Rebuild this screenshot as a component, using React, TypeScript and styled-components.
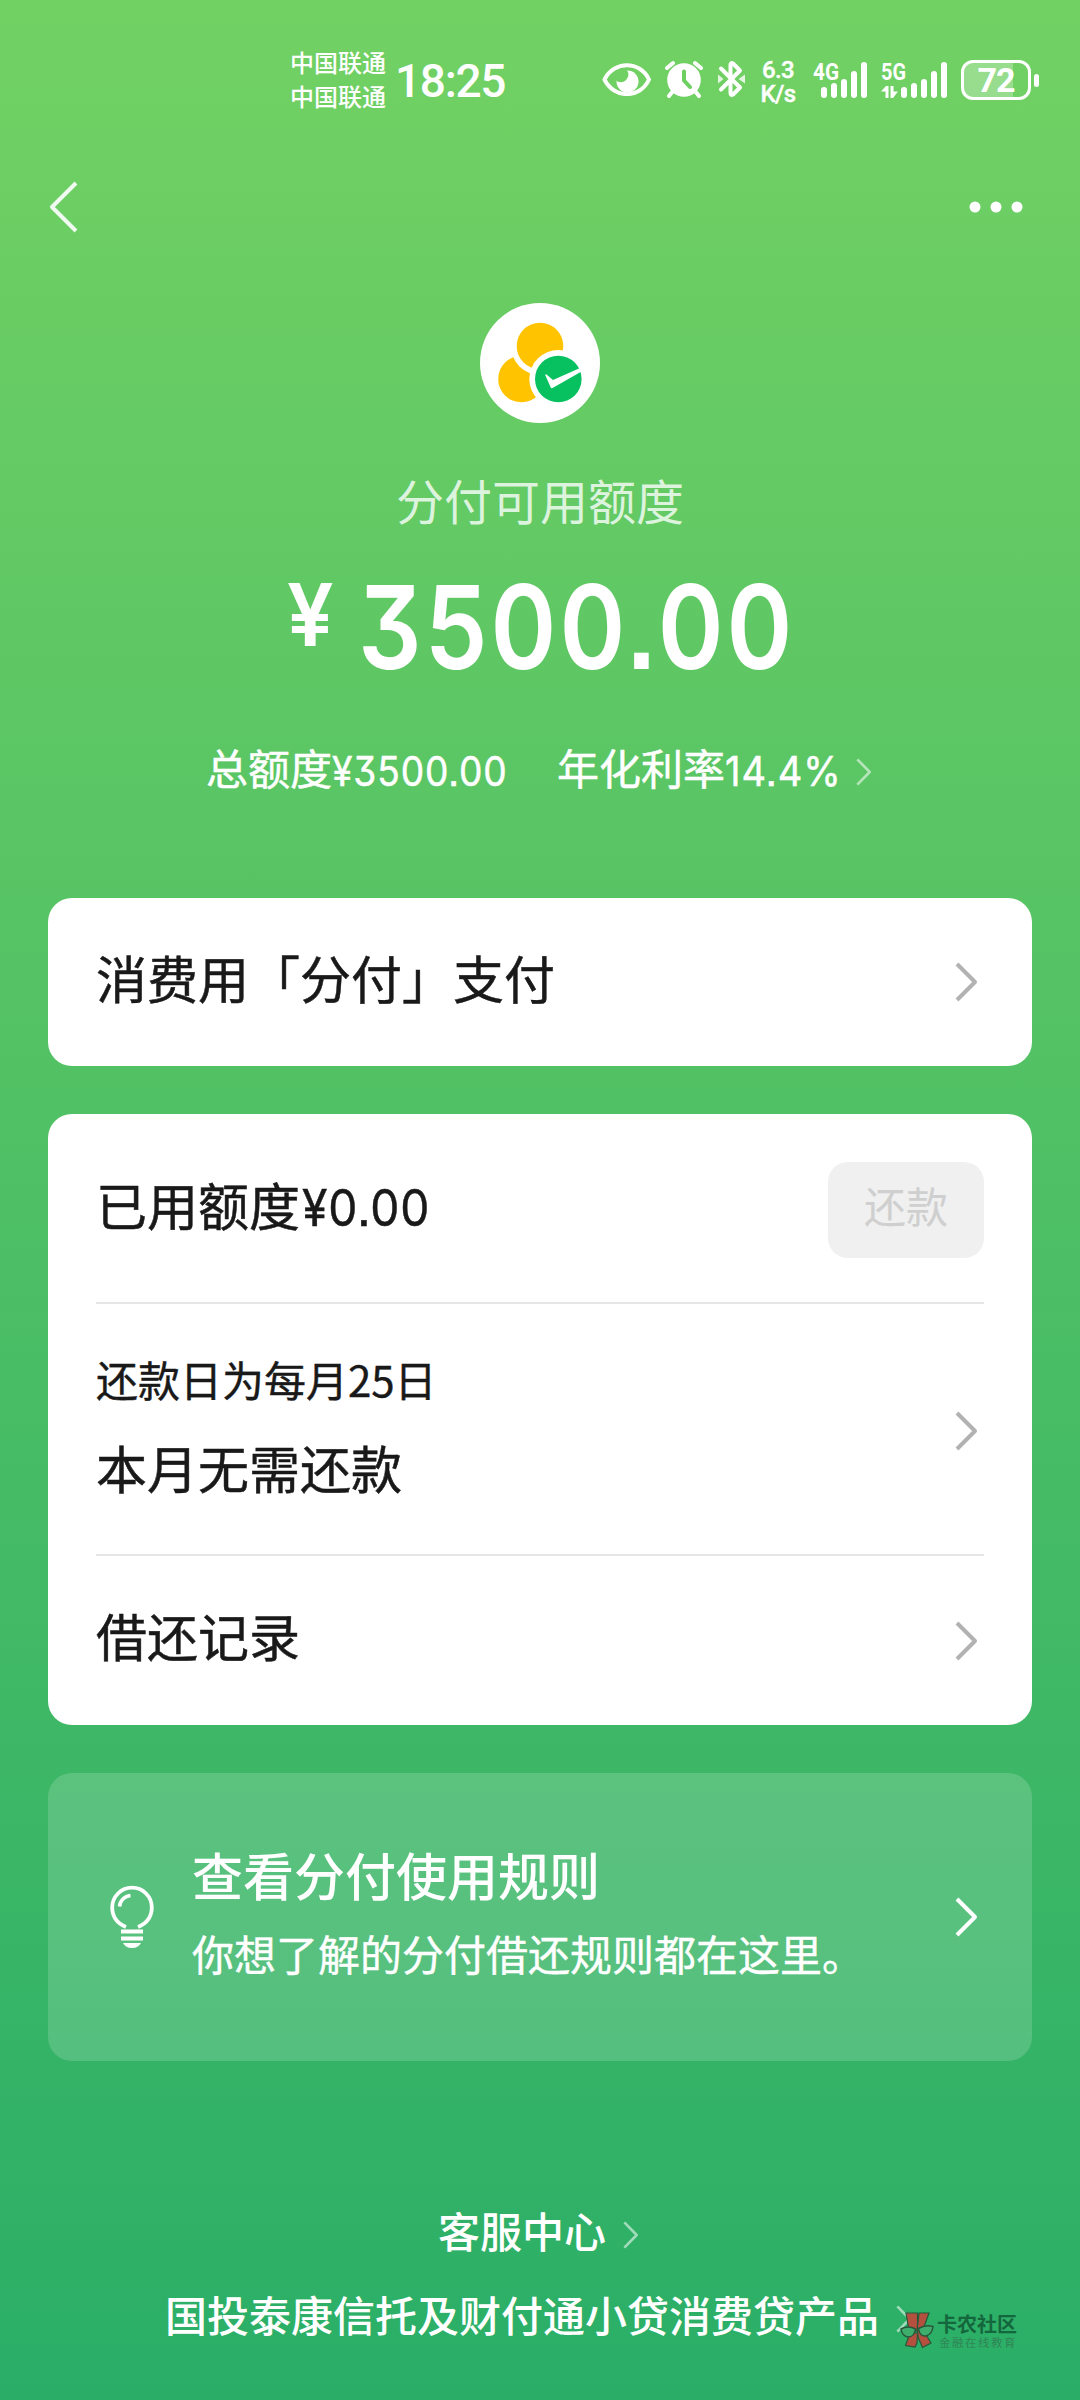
import React from "react";
import styled, { createGlobalStyle } from "styled-components";

const GlobalStyle = createGlobalStyle`
  * { box-sizing: border-box; }
  html, body { margin: 0; padding: 0; }
  body {
    width: 1080px;
    font-family: "Noto Sans CJK SC", "Noto Sans", sans-serif;
  }
  svg { display: block; flex: none; }
`;

const Screen = styled.main`
  position: relative;
  display: flex;
  flex-direction: column;
  width: 1080px;
  height: 2400px;
  overflow: hidden;
  color: #fff;
  background: linear-gradient(180deg, #72d163 0%, #2aae67 100%);
`;

/* ---------- status bar ---------- */

const StatusBar = styled.header`
  display: flex;
  height: 150px;
  padding: 45px 40px 0 290px;
`;

const Carriers = styled.div`
  display: flex;
  flex-direction: column;
  width: 105px;
  font-size: 24px;
  font-weight: 500;
  line-height: 34px;
`;

const Clock = styled.time`
  width: 207px;
  padding-top: 1px;
  font-family: Roboto, sans-serif;
  font-size: 46px;
  font-weight: 500;
  line-height: 70px;
  letter-spacing: -1.3px;
`;

const StatusIcons = styled.div`
  display: flex;
  align-items: flex-start;
  padding-top: 15px;
`;

const StatusSlot = styled.div<{ $w: number }>`
  width: ${(p) => p.$w}px;
`;

const NetSpeed = styled.div`
  display: flex;
  flex-direction: column;
  width: 54px;
  margin: -2px 0 0 -1px;
  font-family: Roboto, sans-serif;
  font-size: 24px;
  font-weight: 500;
  line-height: 24px;
  -webkit-text-stroke: 0.4px currentColor;
`;

const SpeedLine = styled.span`
  width: 38px;
  text-align: center;
  letter-spacing: -0.6px;
`;

const Battery = styled.div`
  display: flex;
  align-items: center;
  gap: 3px;
`;

const BatteryBody = styled.div`
  display: flex;
  align-items: center;
  justify-content: center;
  width: 70px;
  height: 40px;
  border: 3px solid #fff;
  border-radius: 12px;
  background: linear-gradient(90deg, rgba(255, 255, 255, 0.28) 76%, transparent 76%);
  font-family: Roboto, sans-serif;
  font-size: 34px;
  font-weight: 700;
  line-height: 34px;
  letter-spacing: -1px;
`;

const BatteryNub = styled.div`
  width: 5px;
  height: 13px;
  border-radius: 3px;
  background: #fff;
`;

/* ---------- navigation ---------- */

const NavBar = styled.nav`
  display: flex;
  align-items: center;
  justify-content: space-between;
  height: 114px;
  padding: 0 57px 0 49px;
`;

/* ---------- summary ---------- */

const Summary = styled.section`
  display: flex;
  flex-direction: column;
  align-items: center;
  height: 634px;
  padding-top: 39px;
`;

const SummaryLabel = styled.h1`
  margin: 40px 0 0;
  font-size: 48px;
  font-weight: 400;
  line-height: 72px;
  color: rgba(255, 255, 255, 0.78);
`;

const Amount = styled.div`
  display: flex;
  align-items: flex-start;
  width: 506px;
  height: 140px;
  margin-top: 23px;
`;

const Yen = styled.span`
  width: 71px;
  padding-top: 5px;
  font-family: Inter, Roboto, sans-serif;
  font-size: 87px;
  font-weight: 600;
  line-height: 1.2;
  transform: scaleX(0.95);
  transform-origin: 0 50%;
`;

const Figures = styled.span<{ $size: number; $w: number; $scale?: number; $weight?: number; $gap?: number }>`
  display: inline-block;
  width: ${(p) => p.$w}px;
  font-family: Inter, Roboto, sans-serif;
  font-feature-settings: "cv09" 1, "ss07" 1;
  font-size: ${(p) => p.$size}px;
  font-weight: ${(p) => p.$weight ?? 400};
  letter-spacing: ${(p) => p.$gap ?? 0}px;
  line-height: 1.2;
  white-space: nowrap;
  transform: scaleX(${(p) => p.$scale ?? 0.86});
  transform-origin: 0 50%;
`;

const RateRow = styled.div`
  display: flex;
  align-items: center;
  width: 668px;
  height: 64px;
  margin-top: 42px;
  font-size: 42px;
  line-height: 64px;
  -webkit-text-stroke: 0.5px currentColor;
`;

const RateItem = styled.span<{ $w: number }>`
  display: flex;
  align-items: center;
  width: ${(p) => p.$w}px;
`;

const RateName = styled.span`
  margin-top: -10px;
`;

/* ---------- cards ---------- */

const Cards = styled.section`
  display: flex;
  flex-direction: column;
  gap: 48px;
  padding: 0 48px;
`;

const Card = styled.div<{ $tint?: boolean; $h: number }>`
  display: flex;
  flex-direction: column;
  height: ${(p) => p.$h}px;
  padding: 0 48px;
  border-radius: 24px;
  background: ${(p) => (p.$tint ? "rgba(255, 255, 255, 0.16)" : "#fff")};
  color: ${(p) => (p.$tint ? "#fff" : "#191919")};
`;

const Row = styled.div<{ $h: number; $line?: boolean }>`
  display: flex;
  align-items: center;
  justify-content: space-between;
  height: ${(p) => p.$h}px;
  padding-top: ${(p) => (p.$line ? 3 : 0)}px;
  border-bottom: ${(p) => (p.$line ? "2px solid #e6e6e6" : "0")};
`;

const RowText = styled.div<{ $lift?: number }>`
  display: flex;
  flex-direction: column;
  flex: 1;
  margin-top: -${(p) => p.$lift ?? 0}px;
`;

const Title = styled.div<{ $weight?: number }>`
  display: flex;
  align-items: center;
  height: 76px;
  margin-top: -11px;
  font-size: 51px;
  font-weight: ${(p) => p.$weight ?? 400};
  line-height: 76px;
  white-space: nowrap;
  -webkit-text-stroke: ${(p) => (p.$weight ? 0 : 0.5)}px currentColor;
`;

const UsedAmount = styled.span`
  display: flex;
  padding: 7px 0 0 2px;
`;

const Caption = styled.div<{ $before?: number; $after?: number }>`
  height: 60px;
  margin-top: ${(p) => p.$before ?? 0}px;
  margin-bottom: ${(p) => p.$after ?? 0}px;
  font-size: 42px;
  line-height: 60px;
  white-space: nowrap;
  -webkit-text-stroke: 0.4px currentColor;
`;

const ChevronBox = styled.span`
  display: flex;
  margin-right: 6px;
`;

const RepayButton = styled.button`
  width: 156px;
  height: 96px;
  padding: 0 0 9px;
  border: 0;
  border-radius: 20px;
  background: #f0f0f0;
  color: #cfcfcf;
  font: 400 42px/1.4 "Noto Sans CJK SC", sans-serif;
`;

const BulbBox = styled.span`
  display: flex;
  width: 96px;
  padding-left: 13px;
`;

/* ---------- footer ---------- */

const Footer = styled.footer`
  display: flex;
  flex-direction: column;
  align-items: flex-start;
  padding-top: 132px;
`;

const FooterLink = styled.a<{ $x: number }>`
  display: flex;
  align-items: center;
  gap: 17px;
  height: 84px;
  padding-left: ${(p) => p.$x}px;
  font-size: 42px;
  font-weight: 500;
  line-height: 64px;
  white-space: nowrap;
`;

const FooterText = styled.span`
  margin-top: -10px;
`;

const Watermark = styled.div`
  position: absolute;
  left: 900px;
  top: 2311px;
  display: flex;
  gap: 3px;
`;

const WatermarkText = styled.div`
  display: flex;
  flex-direction: column;
  padding-top: 2px;
`;

const WatermarkName = styled.span`
  font-size: 20px;
  font-weight: 700;
  line-height: 22px;
  color: #14663c;
`;

const WatermarkSub = styled.span`
  padding-left: 2px;
  font-size: 11.5px;
  line-height: 15px;
  letter-spacing: 1.5px;
  color: rgba(50, 110, 75, 0.65);
`;

/* ---------- icons ---------- */

const Chevron = ({ w = 23, h = 40, stroke = 4, color = "#b2b2b2" }) => (
  <svg width={w} height={h} viewBox={`0 0 ${w} ${h}`} fill="none">
    <path
      d={`M${stroke / 2} ${stroke / 2} L${w - stroke / 2 - 1} ${h / 2} L${stroke / 2} ${h - stroke / 2}`}
      stroke={color}
      strokeWidth={stroke}
      strokeLinejoin="round"
    />
  </svg>
);

const SmallChevron = () => <Chevron w={16} h={28} stroke={2.6} color="rgba(255,255,255,0.55)" />;

const BackIcon = () => (
  <svg width="30" height="52" viewBox="0 0 30 52" fill="none">
    <path d="M27 2 L3 26 L27 50" stroke="#fff" strokeOpacity="0.9" strokeWidth="4" strokeLinejoin="round" />
  </svg>
);

const MoreIcon = () => (
  <svg width="54" height="12" viewBox="0 0 54 12" fill="#fff">
    <circle cx="6" cy="6" r="5.5" />
    <circle cx="27" cy="6" r="5.5" />
    <circle cx="48" cy="6" r="5.5" />
  </svg>
);

const FenfuLogo = () => (
  <svg width="120" height="120" viewBox="0 0 120 120">
    <circle cx="60" cy="60" r="60" fill="#fff" />
    <circle cx="41.5" cy="76" r="23.3" fill="#ffc300" />
    <circle cx="60" cy="43" r="29" fill="#fff" />
    <circle cx="60" cy="43" r="23.3" fill="#ffc300" />
    <circle cx="78.3" cy="76" r="29" fill="#fff" />
    <circle cx="78.3" cy="76" r="23.3" fill="#07c160" />
    <path d="M65 71.5 L66.5 71.5 L73 77 L99.5 65.2 L101.5 68.6 L73 84.8 Q71.3 86 70.5 84 Z" fill="#fff" />
  </svg>
);

const EyeIcon = () => (
  <svg width="50" height="36" viewBox="0 0 50 36" fill="none">
    <circle cx="25.5" cy="21.5" r="11" fill="#fff" />
    <circle cx="18.8" cy="14.6" r="7.6" fill="#70d063" />
    <path d="M2.5 19.5 C12 0.5 38 0.5 47 19.5 C38 39 12 39 2.5 19.5 Z" stroke="#fff" strokeWidth="4" strokeLinejoin="round" />
  </svg>
);

const AlarmIcon = () => (
  <svg width="40" height="38" viewBox="0 0 40 38" fill="none">
    <circle cx="20" cy="20" r="16.8" fill="#fff" />
    <path d="M3 8 L9 3 M37 8 L31 3 M9 31 L5 36 M31 31 L35 36" stroke="#fff" strokeWidth="4" strokeLinecap="round" />
    <path d="M20 11.5 V20.5 L26 27" stroke="#6ecf63" strokeWidth="4" strokeLinecap="round" strokeLinejoin="round" />
  </svg>
);

const BluetoothIcon = () => (
  <svg width="27" height="38" viewBox="0 0 27 38" fill="none">
    <path
      d="M3 8.5 L22 27.5 L15 34.5 Q12.5 36 12.5 33 V23 M12.5 15 V5 Q12.5 2 15 3.5 L22 10.5 L3 29.5"
      stroke="#fff"
      strokeWidth="4"
      strokeLinecap="round"
      strokeLinejoin="round"
    />
    <path d="M0 14.5 L5.5 19 L0 23.5 Z M27 14.5 L20.5 19 L27 23.5 Z" fill="#fff" fillOpacity="0.8" />
  </svg>
);

const bars = [
  [8, 27],
  [18, 23],
  [28, 19],
  [38, 11],
  [48, 2],
];

const SignalSvg = styled.svg`
  margin-top: -8px;
`;

const SignalIcon = ({ label, shift = 0, arrows = false }: { label: string; shift?: number; arrows?: boolean }) => (
  <SignalSvg width={56 + shift} height="48" viewBox={`0 -8 ${56 + shift} 48`}>
    <text x="0" y="20" fill="#fff" fontFamily="Roboto, sans-serif" fontSize="24" fontWeight="700" textLength={shift ? 25 : 26} lengthAdjust="spacingAndGlyphs">
      {label}
    </text>
    {bars.map(([x, y]) => (
      <rect key={x} x={x + shift} y={y} width="6" height={38 - y} rx="3" fill="#fff" />
    ))}
    {arrows && <path d="M0 31.5 L5 26 H7.5 V38 H4.5 V31.5 Z M9.5 26 H12.5 V31.5 H17 L12 38 H9.5 Z" fill="#fff" />}
  </SignalSvg>
);

const BulbIcon = () => (
  <svg width="46" height="64" viewBox="0 0 46 64" fill="none" stroke="#fff">
    <path d="M17 42 C7.5 38 3.2 30.5 3.2 22.5 A19.8 19.8 0 0 1 42.8 22.5 C42.8 30.5 38.5 38 29 42" strokeWidth="3.8" />
    <path d="M10.5 21.5 A12 12 0 0 1 21.5 10.5" strokeWidth="3.6" />
    <path d="M12 46.5 H34 M12 53.5 H34" strokeWidth="3.8" />
    <path d="M14 58 H32 Q29.5 63 23 63 Q16.5 63 14 58 Z" fill="#fff" stroke="none" />
  </svg>
);

const EmblemIcon = () => (
  <svg width="34" height="38" viewBox="0 0 34 38">
    <g fill="#b5503f" stroke="#27583a" strokeWidth="1.2">
      <path d="M6 2 H17.5 V20 H9 Z" />
      <path d="M19 2 H29 L22.5 20 H17 Z" />
      <path d="M10 22 H17.5 L17 32 L15 36 L5.5 34.5 Z" />
      <path d="M17.5 18 H22.5 L31 32 L22.5 36.5 L18 26 Z" />
    </g>
    <path d="M1 18 Q8 14 15.5 18 Q14.5 26 8 26 Q2 25 1 18 Z M33 15.5 Q25 13.5 18.5 17.5 Q19.5 25.5 26 25 Q32 23.5 33 15.5 Z" fill="#3fae6c" stroke="#27583a" strokeWidth="1.5" />
  </svg>
);

/* ---------- page ---------- */

export default function App() {
  return (
    <Screen>
      <GlobalStyle />
      <StatusBar>
        <Carriers>
          <span>中国联通</span>
          <span>中国联通</span>
        </Carriers>
        <Clock>18:25</Clock>
        <StatusIcons>
          <StatusSlot $w={62}>
            <EyeIcon />
          </StatusSlot>
          <StatusSlot $w={54}>
            <AlarmIcon />
          </StatusSlot>
          <StatusSlot $w={42}>
            <BluetoothIcon />
          </StatusSlot>
          <NetSpeed>
            <SpeedLine>6.3</SpeedLine>
            <SpeedLine>K/s</SpeedLine>
          </NetSpeed>
          <StatusSlot $w={68}>
            <SignalIcon label="4G" />
          </StatusSlot>
          <StatusSlot $w={80}>
            <SignalIcon label="5G" shift={12} arrows />
          </StatusSlot>
          <Battery>
            <BatteryBody>72</BatteryBody>
            <BatteryNub />
          </Battery>
        </StatusIcons>
      </StatusBar>

      <NavBar>
        <BackIcon />
        <MoreIcon />
      </NavBar>

      <Summary>
        <FenfuLogo />
        <SummaryLabel>分付可用额度</SummaryLabel>
        <Amount>
          <Yen>¥</Yen>
          <Figures $size={116} $w={430} $weight={600} $gap={3.6}>3500.00</Figures>
        </Amount>
        <RateRow>
          <RateItem $w={351}>
            <RateName>总额度</RateName>
            <Figures $size={41} $w={174} $gap={1} $scale={0.905}>¥3500.00</Figures>
          </RateItem>
          <RateItem $w={299}>
            <RateName>年化利率</RateName>
            <Figures $size={41} $w={112} $gap={1} $scale={0.93}>14.4%</Figures>
          </RateItem>
          <SmallChevron />
        </RateRow>
      </Summary>

      <Cards>
        <Card $h={168}>
          <Row $h={168}>
            <Title>消费用「分付」支付</Title>
            <ChevronBox>
              <Chevron />
            </ChevronBox>
          </Row>
        </Card>

        <Card $h={611}>
          <Row $h={190} $line>
            <Title>
              已用额度
              <UsedAmount>
                <Figures $size={51} $w={126} $gap={1} $scale={0.905}>¥0.00</Figures>
              </UsedAmount>
            </Title>
            <RepayButton>还款</RepayButton>
          </Row>
          <Row $h={252} $line>
            <RowText $lift={8}>
              <Caption $after={31}>还款日为每月25日</Caption>
              <Title>本月无需还款</Title>
            </RowText>
            <ChevronBox>
              <Chevron />
            </ChevronBox>
          </Row>
          <Row $h={169}>
            <Title>借还记录</Title>
            <ChevronBox>
              <Chevron />
            </ChevronBox>
          </Row>
        </Card>

        <Card $tint $h={288}>
          <Row $h={288}>
            <BulbBox>
              <BulbIcon />
            </BulbBox>
            <RowText $lift={4}>
              <Title $weight={500}>查看分付使用规则</Title>
              <Caption $before={11}>你想了解的分付借还规则都在这里。</Caption>
            </RowText>
            <ChevronBox>
              <Chevron color="#fff" />
            </ChevronBox>
          </Row>
        </Card>
      </Cards>

      <Footer>
        <FooterLink $x={438}>
          <FooterText>客服中心</FooterText>
          <SmallChevron />
        </FooterLink>
        <FooterLink $x={165}>
          <FooterText>国投泰康信托及财付通小贷消费贷产品</FooterText>
          <SmallChevron />
        </FooterLink>
      </Footer>

      <Watermark>
        <EmblemIcon />
        <WatermarkText>
          <WatermarkName>卡农社区</WatermarkName>
          <WatermarkSub>金融在线教育</WatermarkSub>
        </WatermarkText>
      </Watermark>
    </Screen>
  );
}
